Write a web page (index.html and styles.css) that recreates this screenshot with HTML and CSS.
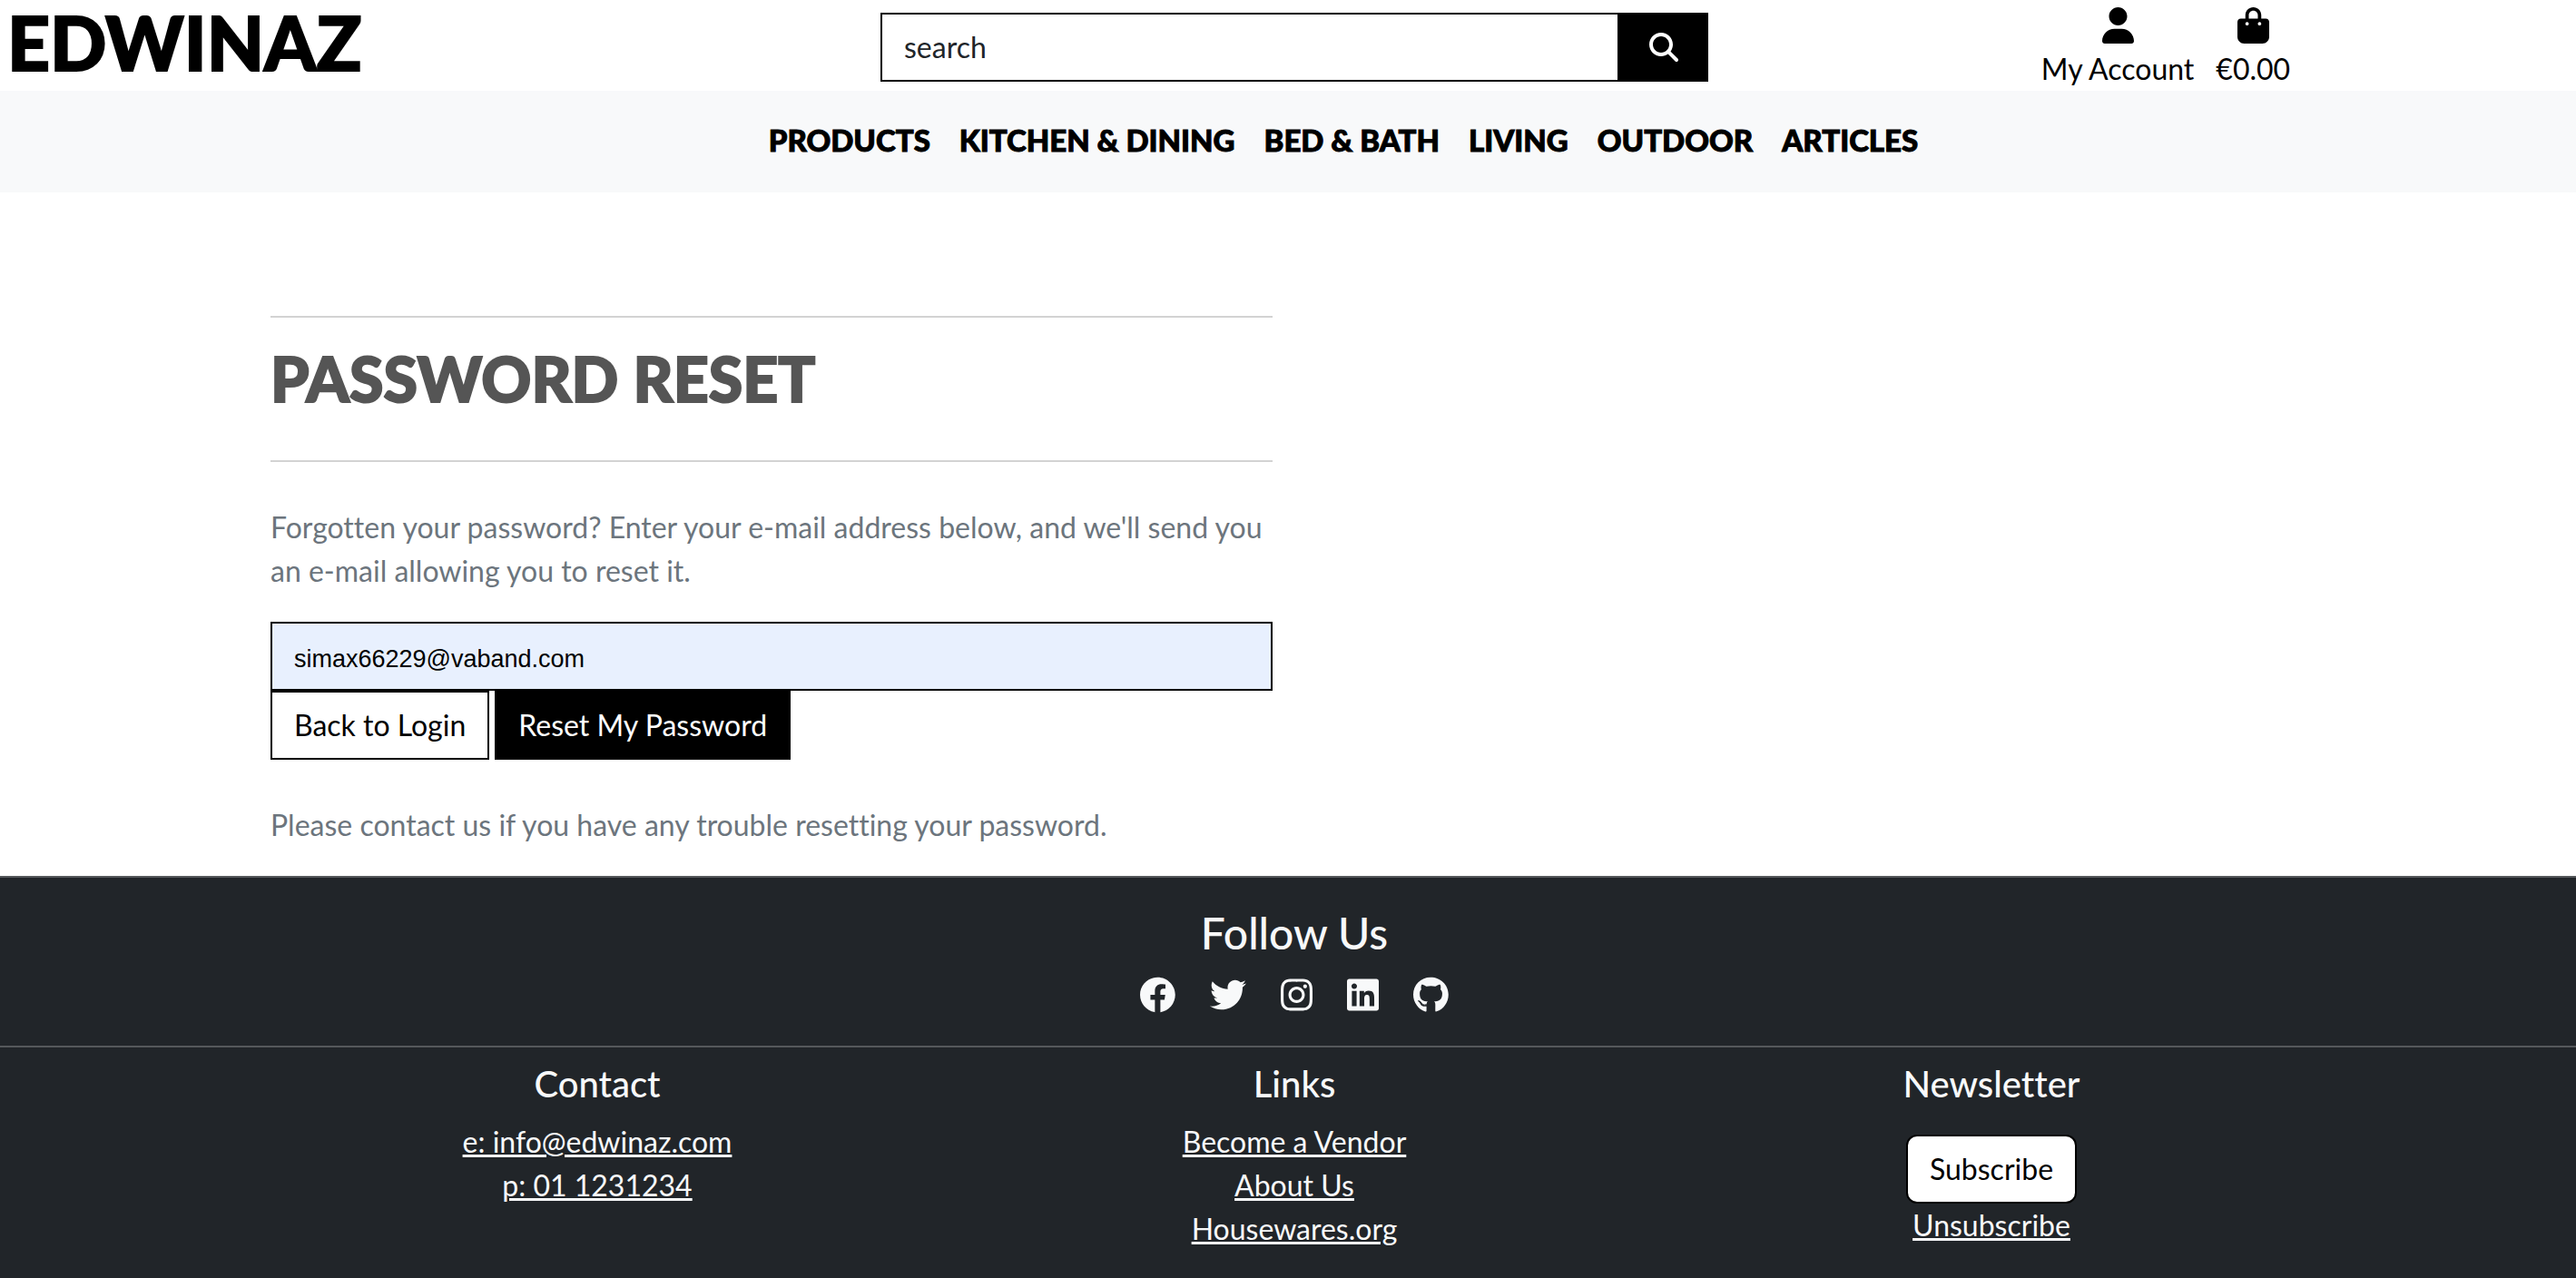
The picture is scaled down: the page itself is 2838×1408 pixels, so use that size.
FILE: index.html
```html
<!DOCTYPE html>
<html lang="en">
<head>
<meta charset="utf-8">
<title>Edwinaz - Password Reset</title>
<link rel="stylesheet" href="styles.css">
</head>
<body>
<header class="topbar">
  <a class="brand" href="#">EDWINAZ</a>
  <form class="search" role="search">
    <input class="search-input" type="text" placeholder="search" aria-label="Search">
    <button class="search-button" type="button" aria-label="Submit search">
      <svg class="icon-search" viewBox="0 0 512 512"><path d="M416 208c0 45.900-14.900 88.300-40 122.700L502.600 457.400c12.500 12.500 12.500 32.800 0 45.300s-32.800 12.500-45.300 0L330.700 376c-34.400 25.200-76.800 40-122.700 40C93.100 416 0 322.900 0 208S93.100 0 208 0S416 93.100 416 208zM208 352c79.500 0 144-64.500 144-144s-64.500-144-144-144S64 128.500 64 208s64.500 144 144 144z"/></svg>
    </button>
  </form>
  <ul class="account">
    <li><a class="account-link" href="#">
      <svg class="icon" viewBox="0 0 448 512"><path d="M224 256c70.700 0 128-57.310 128-128s-57.300-128-128-128C153.300 0 96 57.310 96 128S153.300 256 224 256zM274.700 304H173.300C77.610 304 0 381.600 0 477.300c0 19.140 15.520 34.670 34.660 34.670h378.700C432.500 512 448 496.500 448 477.300C448 381.600 370.400 304 274.700 304z"/></svg>
      <span>My Account</span></a></li>
    <li><a class="account-link" href="#">
      <svg class="icon" viewBox="0 0 448 512"><path d="M112 112C112 50.140 162.100 0 224 0C285.900 0 336 50.140 336 112V160H400C426.500 160 448 181.500 448 208V416C448 469 405 512 352 512H96C42.980 512 0 469 0 416V208C0 181.500 21.490 160 48 160H112V112zM160 160H288V112C288 76.650 259.300 48 224 48C188.700 48 160 76.650 160 112V160zM136 256C149.300 256 160 245.300 160 232C160 218.700 149.300 208 136 208C122.700 208 112 218.700 112 232C112 245.300 122.700 256 136 256zM312 208C298.700 208 288 218.700 288 232C288 245.300 298.700 256 312 256C325.300 256 336 245.300 336 232C336 218.700 325.300 208 312 208z"/></svg>
      <span>€0.00</span></a></li>
  </ul>
</header>
<nav class="mainnav">
  <a href="#">PRODUCTS</a>
  <a href="#">KITCHEN &amp; DINING</a>
  <a href="#">BED &amp; BATH</a>
  <a href="#">LIVING</a>
  <a href="#">OUTDOOR</a>
  <a href="#">ARTICLES</a>
</nav>
<main class="main">
  <div class="container">
    <section class="panel">
      <h1 class="title">PASSWORD RESET</h1>
      <p class="note">Forgotten your password? Enter your e-mail address below, and we'll send you an e-mail allowing you to reset it.</p>
      <form class="reset">
        <input class="email" type="email" value="simax66229@vaband.com" aria-label="E-mail address">
        <div class="actions">
          <button class="button" type="button">Back to Login</button>
          <button class="button button-dark" type="button">Reset My Password</button>
        </div>
      </form>
      <p class="note">Please contact us if you have any trouble resetting your password.</p>
    </section>
  </div>
</main>
<footer class="footer">
  <section class="follow">
    <h2 class="follow-title">Follow Us</h2>
    <div class="social">
      <a href="#" aria-label="Facebook"><svg class="icon" viewBox="8 0 496 512"><path d="M504 256C504 119 393 8 256 8S8 119 8 256c0 123.780 90.690 226.380 209.250 245V327.690h-63V256h63v-54.640c0-62.150 37-96.480 93.670-96.480 27.140 0 55.520 4.840 55.520 4.840v61h-31.280c-30.800 0-40.410 19.120-40.410 38.730V256h68.780l-11 71.690h-57.780V501C413.310 482.380 504 379.780 504 256z"/></svg></a>
      <a href="#" aria-label="Twitter"><svg class="icon" viewBox="0 0 512 512"><path d="M459.370 151.716c.325 4.548.325 9.097.325 13.645 0 138.720-105.583 298.558-298.558 298.558-59.452 0-114.680-17.219-161.137-47.106 8.447.974 16.568 1.299 25.340 1.299 49.055 0 94.213-16.568 130.274-44.832-46.132-.975-84.792-31.188-98.112-72.772 6.498.974 12.995 1.624 19.818 1.624 9.421 0 18.843-1.300 27.614-3.573-48.081-9.747-84.143-51.980-84.143-102.985v-1.299c13.969 7.797 30.214 12.670 47.431 13.319-28.264-18.843-46.781-51.005-46.781-87.391 0-19.492 5.197-37.360 14.294-52.954 51.655 63.675 129.300 105.258 216.365 109.807-1.624-7.797-2.599-15.918-2.599-24.040 0-57.828 46.782-104.934 104.934-104.934 30.213 0 57.502 12.670 76.670 33.137 23.715-4.548 46.456-13.320 66.599-25.340-7.798 24.366-24.366 44.833-46.132 57.827 21.117-2.273 41.584-8.122 60.426-16.243-14.292 20.791-32.161 39.308-52.628 54.253z"/></svg></a>
      <a href="#" aria-label="Instagram"><svg class="icon" viewBox="0 0 448 512"><path d="M224.100 141c-63.600 0-114.900 51.300-114.900 114.900s51.300 114.900 114.900 114.900S339 319.500 339 255.900 287.700 141 224.100 141zm0 189.600c-41.100 0-74.700-33.500-74.700-74.700s33.500-74.700 74.700-74.700 74.700 33.500 74.700 74.700-33.600 74.700-74.700 74.700zm146.400-194.300c0 14.900-12 26.800-26.800 26.800-14.900 0-26.800-12-26.800-26.800s12-26.800 26.800-26.800 26.800 12 26.800 26.800zm76.100 27.200c-1.700-35.900-9.900-67.700-36.200-93.900-26.200-26.200-58-34.400-93.900-36.200-37-2.100-147.900-2.100-184.900 0-35.800 1.700-67.600 9.900-93.900 36.100s-34.400 58-36.200 93.900c-2.100 37-2.100 147.900 0 184.900 1.700 35.900 9.900 67.700 36.200 93.900s58 34.400 93.900 36.200c37 2.100 147.900 2.100 184.900 0 35.900-1.700 67.700-9.900 93.900-36.200 26.200-26.200 34.400-58 36.200-93.900 2.100-37 2.100-147.800 0-184.800zM398.800 388c-7.800 19.600-22.900 34.700-42.600 42.600-29.500 11.700-99.500 9-132.100 9s-102.700 2.600-132.100-9c-19.600-7.800-34.700-22.900-42.600-42.600-11.700-29.500-9-99.500-9-132.100s-2.600-102.700 9-132.100c7.800-19.600 22.900-34.700 42.600-42.600 29.500-11.700 99.500-9 132.100-9s102.700-2.600 132.100 9c19.600 7.800 34.700 22.900 42.600 42.600 11.700 29.500 9 99.500 9 132.100s2.700 102.700-9 132.100z"/></svg></a>
      <a href="#" aria-label="LinkedIn"><svg class="icon" viewBox="0 0 448 512"><path d="M416 32H31.900C14.300 32 0 46.500 0 64.300v383.400C0 465.500 14.300 480 31.900 480H416c17.600 0 32-14.500 32-32.300V64.300c0-17.800-14.400-32.300-32-32.300zM135.400 416H69V202.200h66.500V416zm-33.200-243c-21.300 0-38.500-17.300-38.500-38.500S80.900 96 102.200 96c21.200 0 38.500 17.300 38.500 38.500 0 21.300-17.200 38.500-38.500 38.500zm282.100 243h-66.400V312c0-24.800-.5-56.700-34.500-56.700-34.600 0-39.900 27-39.900 54.900V416h-66.400V202.200h63.700v29.200h.9c8.900-16.800 30.600-34.500 62.900-34.500 67.200 0 79.700 44.300 79.700 101.900V416z"/></svg></a>
      <a href="#" aria-label="GitHub"><svg class="icon" viewBox="0 0 496 512"><path d="M165.900 397.400c0 2-2.300 3.600-5.200 3.600-3.300.3-5.600-1.300-5.600-3.600 0-2 2.300-3.600 5.200-3.600 3-.3 5.600 1.300 5.600 3.600zm-31.100-4.500c-.7 2 1.300 4.300 4.300 4.900 2.600 1 5.600 0 6.200-2s-1.300-4.300-4.300-5.200c-2.600-.7-5.500.3-6.200 2.300zm44.200-1.700c-2.900.7-4.900 2.600-4.600 4.900.3 2 2.900 3.300 5.900 2.600 2.900-.7 4.900-2.600 4.600-4.600-.3-1.900-3-3.200-5.900-2.900zM244.800 8C106.100 8 0 113.300 0 252c0 110.900 69.800 205.800 169.500 239.200 12.800 2.300 17.300-5.600 17.300-12.100 0-6.200-.3-40.400-.3-61.400 0 0-70 15-84.700-29.800 0 0-11.400-29.100-27.800-36.600 0 0-22.900-15.700 1.600-15.400 0 0 24.900 2 38.600 25.800 21.900 38.600 58.600 27.500 72.900 20.900 2.300-16 8.800-27.100 16-33.700-55.900-6.200-112.300-14.300-112.300-110.500 0-27.500 7.600-41.300 23.600-58.900-2.600-6.500-11.100-33.300 2.600-67.900 20.900-6.500 69 27 69 27 20-5.600 41.500-8.500 62.800-8.500s42.800 2.900 62.800 8.500c0 0 48.100-33.600 69-27 13.700 34.700 5.200 61.400 2.600 67.900 16 17.700 25.800 31.500 25.800 58.900 0 96.500-58.900 104.200-114.800 110.500 9.200 7.900 17 22.900 17 46.400 0 33.700-.3 75.400-.3 83.600 0 6.500 4.600 14.400 17.300 12.100C428.200 457.800 496 362.900 496 252 496 113.300 383.500 8 244.800 8z"/></svg></a>
    </div>
  </section>
  <div class="columns">
    <section class="column">
      <h3 class="column-title">Contact</h3>
      <a href="#">e: info@edwinaz.com</a>
      <a href="#">p: 01 1231234</a>
    </section>
    <section class="column">
      <h3 class="column-title">Links</h3>
      <a href="#">Become a Vendor</a>
      <a href="#">About Us</a>
      <a href="#">Housewares.org</a>
    </section>
    <section class="column">
      <h3 class="column-title">Newsletter</h3>
      <button class="button button-round" type="button">Subscribe</button>
      <a href="#">Unsubscribe</a>
    </section>
  </div>
</footer>
</body>
</html>
```
FILE: styles.css
```css
* { box-sizing: border-box; }

body {
  margin: 0;
  background: #fff;
  color: #000;
  font: 32px/48px Lato, "Liberation Sans", sans-serif;
  font-variant-ligatures: none;
}

h1, h2, h3, p, ul { margin: 0; padding: 0; }
a { color: inherit; text-decoration-thickness: 3px; }
svg { display: block; fill: currentColor; }
.icon { height: 40px; width: auto; }

.topbar {
  display: grid;
  grid-template-columns: repeat(3, 1fr);
  align-items: start;
}
.brand {
  padding-left: 8px;
  font-size: 82px;
  line-height: 92px;
  font-weight: 900;
  text-decoration: none;
  -webkit-text-stroke: 2px #000;
}
.search {
  display: flex;
  height: 76px;
  margin: 14px 10px 0 24px;
}
.search-input {
  flex: 1;
  min-width: 0;
  padding: 0 24px;
  border: 2px solid #000;
  border-radius: 0;
  font: inherit;
}
.search-input::placeholder { color: #212529; opacity: 1; }
.search-button {
  display: grid;
  place-items: center;
  width: 98px;
  padding: 0;
  border: 0;
  background: #000;
  color: #fff;
}
.icon-search { width: 32px; height: 32px; }
.account {
  display: flex;
  justify-content: center;
  gap: 24px;
  padding: 8px 0 0 42px;
  list-style: none;
}
.account-link {
  display: flex;
  flex-direction: column;
  align-items: center;
  gap: 4px;
  text-decoration: none;
}

.mainnav {
  display: flex;
  justify-content: center;
  gap: 32px;
  padding: 30px 0 34px 122px;
  background: #f8f9fa;
  font-size: 33px;
  font-weight: 900;
  -webkit-text-stroke: 1px #000;
}
.mainnav a { text-decoration: none; }

.main { padding: 136px 0 32px 14px; }
.container {
  max-width: 2304px;
  margin: 0 auto;
}
.panel {
  width: 50%;
  padding: 0 24px;
}
.title {
  padding: 28px 0 52px;
  border: solid #d3d3d3;
  border-width: 2px 0;
  color: #555;
  font-size: 68px;
  line-height: 77px;
  font-weight: 900;
  -webkit-text-stroke: 2px #555;
}
.note {
  margin-top: 48px;
  color: #6c757d;
}
.reset { margin-top: 32px; }
.email {
  display: block;
  width: 100%;
  height: 76px;
  padding: 6px 24px 0;
  border: 2px solid #000;
  border-radius: 0;
  background: #e8f0fe;
  color: #000;
  font: 27px "Liberation Sans", Arial, sans-serif;
}
.actions {
  display: flex;
  gap: 6px;
}
.button {
  height: 76px;
  padding: 0 24px;
  border: 2px solid #000;
  background: #fff;
  color: #000;
  font: inherit;
}
.button-dark { background: #000; color: #fff; }
.button-round {
  margin-top: 16px;
  border-radius: 12px;
}

.footer {
  border-top: 2px solid #55585b;
  background: #212529;
  color: #f8f9fa;
  text-align: center;
}
.follow {
  padding: 32px 0 36px 14px;
  border-bottom: 2px solid #55585b;
}
.follow-title {
  font-size: 48px;
  line-height: 58px;
  font-weight: 500;
}
.social {
  display: flex;
  justify-content: center;
  gap: 38px;
  margin-top: 19px;
}
.columns {
  display: grid;
  grid-template-columns: repeat(3, 1fr);
  max-width: 2318px;
  margin: 0 auto;
  padding: 16px 0 30px 14px;
}
.column {
  display: flex;
  flex-direction: column;
  align-items: center;
}
.column-title {
  margin-bottom: 16px;
  font-size: 40px;
  line-height: 48px;
  font-weight: 500;
}
```
